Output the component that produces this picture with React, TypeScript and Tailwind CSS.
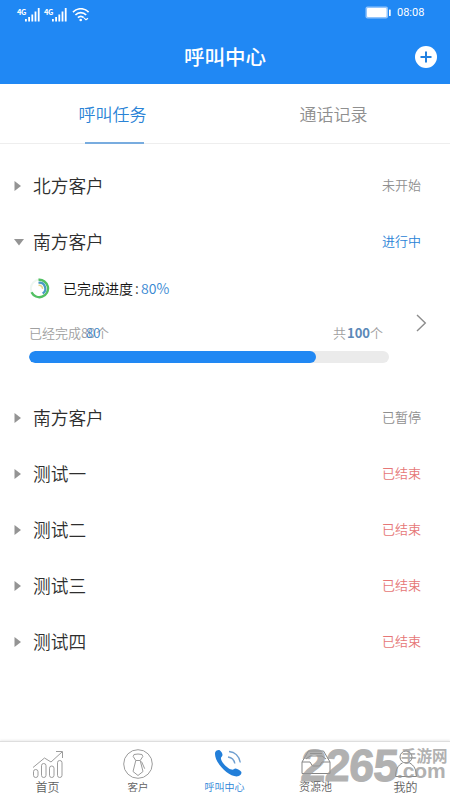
import React from 'react';
import clsx from 'clsx';

type Status = 'pending' | 'running' | 'paused' | 'ended';

interface Task {
    name: string;
    status: Status;
    progress?: { done: number; total: number };
}

const statusLabel: Record<Status, string> = {
    pending: '未开始',
    running: '进行中',
    paused: '已暂停',
    ended: '已结束',
};

const statusColor: Record<Status, string> = {
    pending: 'text-[#8f8f8f]',
    running: 'text-[#2a83d6]',
    paused: 'text-[#8f8f8f]',
    ended: 'text-[#e67777]',
};

const tasks: Task[] = [
    { name: '北方客户', status: 'pending' },
    { name: '南方客户', status: 'running', progress: { done: 80, total: 100 } },
    { name: '南方客户', status: 'paused' },
    { name: '测试一', status: 'ended' },
    { name: '测试二', status: 'ended' },
    { name: '测试三', status: 'ended' },
    { name: '测试四', status: 'ended' },
];

const Signal: React.FC = () => (
    <div className="flex">
        <span className="w-[8px] text-[7.5px] leading-[7px] font-bold tracking-[-0.5px]">4G</span>
        <svg className="w-[15px] h-[14px]" viewBox="0 0 15 14" fill="currentColor">
            <rect x="0" y="11" width="1.8" height="2.5" />
            <rect x="3.2" y="9" width="1.8" height="4.5" />
            <rect x="6.4" y="6.5" width="1.8" height="7" />
            <rect x="9.6" y="3.5" width="1.8" height="10" />
            <rect x="12.8" y="0" width="1.8" height="13.5" />
        </svg>
    </div>
);

const StatusBar: React.FC = () => (
    <div className="flex h-7 items-start pl-[17px] pr-[25px] pt-2">
        <Signal />
        <div className="ml-[4px]">
            <Signal />
        </div>
        <svg className="ml-[5px] w-[18px] h-[14px]" viewBox="0 0 18 14" fill="none" stroke="currentColor" strokeWidth="1.7">
            <path d="M1 4.2C5.3-.4 12.3-.4 16.6 4.2" />
            <path d="M3.4 7c3-3.1 7.8-3.1 10.8 0" />
            <path d="M5.9 9.7c1.7-1.6 4.1-1.6 5.8 0" />
            <circle cx="8.7" cy="12" r="1.3" fill="currentColor" stroke="none" />
            <path d="M12 9.8l2 2 2-1.5" strokeWidth="1.2" />
        </svg>
        <svg className="ml-auto mt-[-2px] w-[26px] h-[13px]" viewBox="0 0 26 13">
            <rect x="0.5" y="0.5" width="22.5" height="12" rx="2" fill="#94c5fb" />
            <rect x="2" y="2" width="19.5" height="9" rx="1" fill="#fff" />
            <rect x="24" y="3.5" width="1.7" height="6.5" rx="0.5" fill="#fff" />
        </svg>
        <span className="ml-[6px] mt-[-2px] w-[28px] font-['Roboto'] text-[11px] leading-[13px] font-normal whitespace-nowrap">08:08</span>
    </div>
);

const Header: React.FC = () => (
    <div className="relative flex h-14 items-center justify-center">
        <h1 className="text-[20.5px] leading-6 font-medium">呼叫中心</h1>
        <svg className="absolute right-[13px] top-[18px] w-[22px] h-[22px]" viewBox="0 0 22 22">
            <circle cx="11" cy="11" r="11" fill="#fff" />
            <path d="M11 5.5v11M5.5 11h11" stroke="#2180e0" strokeWidth="2" />
        </svg>
    </div>
);

const Tabs: React.FC = () => (
    <div className="flex h-[60px] border-b border-[#eeeeee] text-[17px]">
        <button className="relative w-1/2 text-[#2a83d6]">
            呼叫任务
            <span className="absolute bottom-[-1px] left-[85px] h-[2px] w-[59px] bg-[#78acdf]" />
        </button>
        <button className="w-1/2 pr-[8px] text-[#8f8f8f]">通话记录</button>
    </div>
);

const ProgressRing: React.FC = () => (
    <svg className="w-[21px] h-[21px]" viewBox="0 0 21 21" fill="none">
        <circle cx="10.5" cy="10.5" r="8.7" stroke="#eef7f1" strokeWidth="2" />
        <path d="M9.5 1.8a8.7 8.7 0 1 1-7 12.5" stroke="#52c063" strokeWidth="2.4" />
        <path d="M9.5 4.8a5.9 5.9 0 0 1 4.2 10.7" stroke="#4a9ac4" strokeWidth="2.2" />
        <path d="M9.5 7.4a3.3 3.3 0 0 1 4 3.5" stroke="#e2d890" strokeWidth="1.5" />
    </svg>
);

const TaskProgress: React.FC<{ done: number; total: number }> = ({ done, total }) => (
    <div className="flex h-[120px] items-start pl-[29px]">
        <div className="w-[360px]">
            <div className="flex h-[36px] items-center text-[14px]">
                <ProgressRing />
                <span className="ml-[13px] text-[#151515]">已完成进度</span>
                <span className="w-[8px] pl-[2px] text-[#151515]">:</span>
                <span className="text-[#3587d2]">{Math.round((done / total) * 100)}%</span>
            </div>
            <div className="mt-[17px] flex h-[20px] items-center justify-between text-[13px] text-[#a0a0a0]">
                <div className="flex">
                    已经完成
                    <span className="relative w-[15px]">
                        {done}
                        <span className="absolute left-[5px] top-0 text-[#3c85c9]">{done}</span>
                    </span>
                    个
                </div>
                <div className="flex pr-[6px]">
                    共
                    <span className="relative w-[24px] text-[#5b89b8]">
                        <span className="absolute left-[1px] top-0 font-bold">{total}</span>
                    </span>
                    个
                </div>
            </div>
            <div className="mt-[8px] h-3 overflow-hidden rounded-full bg-[#ebebeb]">
                <div className="h-full rounded-full bg-[#2188f3]" style={{ width: `${(done / total) * 100 - 0.3}%` }} />
            </div>
        </div>
        <svg className="ml-[27px] mt-[44px] w-[11px] h-[18px]" viewBox="0 0 11 18" fill="none" stroke="#8c8c8c" strokeWidth="1.4">
            <path d="M1 1l8.3 8L1 17" />
        </svg>
    </div>
);

const TaskRow: React.FC<{ task: Task }> = ({ task }) => (
    <div>
        <div className="flex h-14 items-center pl-[14px] pr-[29px]">
            <svg className="w-[10px] h-[10px]" viewBox="0 0 10 10" fill="#949494">
                {task.progress ? <path d="M0 2h10L5 8.5z" /> : <path d="M0.5 0l6.5 5-6.5 5z" />}
            </svg>
            <span className="ml-[9px] mb-[2px] text-[17.7px] leading-6 text-[#2e2e2e]">{task.name}</span>
            <span className={clsx('ml-auto mb-[2px] text-[13px]', statusColor[task.status])}>{statusLabel[task.status]}</span>
        </div>
        {task.progress && <TaskProgress {...task.progress} />}
    </div>
);

const ChartIcon: React.FC = () => (
    <svg className="w-[32px] h-[30px]" viewBox="0 0 32 30" fill="none" stroke="#9c9c9c" strokeWidth="1">
        <rect x="1.5" y="19.5" width="4.5" height="8" rx="2.2" />
        <rect x="9.5" y="13.5" width="4.5" height="14" rx="2.2" />
        <rect x="17.5" y="16" width="4.5" height="11.5" rx="2.2" />
        <rect x="25.5" y="10.5" width="4.5" height="17" rx="2.2" />
        <path d="M1 17.5L12.5 8l6.5 4L30 2M24 1.5h6.5V8" />
    </svg>
);

const TieIcon: React.FC = () => (
    <svg className="w-[30px] h-[30px]" viewBox="0 0 30 30" fill="none" stroke="#9c9c9c" strokeWidth="1">
        <circle cx="15" cy="15" r="14.3" />
        <path d="M11 5.5q4-1 8 0l.8 2-2.6 4h-4.4l-2.6-4zM12.8 11.5L10 22.5l5 4 5-4-2.8-11M18.5 12.5l3.2 7.2" />
    </svg>
);

const CallIcon: React.FC = () => (
    <svg className="ml-[7px] w-[28px] h-[28px]" viewBox="0 0 28 28">
        <path
            d="M1.2 3.2C2.2 1.3 4.7 .4 6 1.5c1.6 1.5 2.9 3.5 2.4 4.9-.4 1.2-1.5 1.6-1.5 2.8.1 3.8 6.5 10.6 10.8 11.4 1.9.3 2.3-1.4 4-1.2 1.7.2 4.7 2 5.5 3.4 1 1.8-1.2 4-3.3 4.5C14.7 28.8-.9 12.2 1.2 3.2z"
            fill="#237fd9"
        />
        <path d="M15 2.5c5.7.5 10.3 4.5 11.3 11M14 8c3.4.5 6.2 3 6.8 6.5" fill="none" stroke="#6f9fd0" strokeWidth="1.4" />
    </svg>
);

const InboxIcon: React.FC = () => (
    <svg className="w-[30px] h-[28px]" viewBox="0 0 30 28" fill="none" stroke="#858585" strokeWidth="1">
        <path d="M1 12L7.5 1h15L29 12v11.5H1zM1 12h8l2.5 4h7l2.5-4h8M5 9l4-3h12l4 3M9 3.500h12" />
    </svg>
);

const PersonIcon: React.FC = () => (
    <svg className="w-[24px] h-[28px]" viewBox="0 0 24 28" fill="none" stroke="#858585" strokeWidth="1">
        <circle cx="12" cy="7" r="6" />
        <path d="M8.5 13C4 15 1.5 20 1.5 26.5h21c0-6.5-2.5-11.5-7-13.5" />
    </svg>
);

// Site mark drawn over the right side of the tab bar
const Watermark: React.FC = () => (
    <div className="pointer-events-none absolute left-[301px] top-[1px] flex whitespace-nowrap text-[#979797] opacity-75">
        <span className="w-[98px] skew-x-[-4deg] font-['Liberation_Sans'] text-[45px] leading-[45px] font-bold tracking-[-0.8px] [-webkit-text-stroke:1px_#979797]">
            2265
        </span>
        <div className="pt-[4px] pl-[2px]">
            <div className="text-[15.5px] leading-[16px] font-bold">手游网</div>
            <div className="ml-[-4px] font-['Liberation_Sans'] text-[21px] leading-[16px] font-bold tracking-[-0.1px]">.com</div>
        </div>
    </div>
);

const navItems = [
    { label: '首页', icon: <ChartIcon />, cell: 'w-[95px]', text: 'text-[12px] text-[#606060]', top: 'pt-[8px]' },
    { label: '客户', icon: <TieIcon />, cell: 'w-[86px]', text: 'text-[10.5px] text-[#606060]', top: 'pt-[7px]' },
    { label: '呼叫中心', icon: <CallIcon />, cell: 'w-[87px]', text: 'text-[10px] text-[#2a83d6]', top: 'pt-[7px]' },
    { label: '资源池', icon: <InboxIcon />, cell: 'w-[95px]', text: 'text-[11px] text-[#606060]', top: 'pt-[8px]' },
    { label: '我的', icon: <PersonIcon />, cell: 'w-[85px]', text: 'text-[12px] text-[#606060]', top: 'pt-[8px]' },
];

const BottomNav: React.FC = () => (
    <div className="relative flex h-[59px] border-t border-[#dedede] bg-white shadow-[0_-1px_2px_rgba(0,0,0,0.08)]">
        {navItems.map((item) => (
            <button key={item.label} className={clsx('flex flex-col items-center', item.cell)}>
                <span className={clsx('flex h-[36px] shrink-0 items-start', item.top)}>{item.icon}</span>
                <span className={clsx('relative z-10 leading-[17px]', item.text)}>{item.label}</span>
            </button>
        ))}
        <Watermark />
    </div>
);

const App: React.FC = () => {
    return (
        <div className="flex h-[800px] w-[450px] flex-col overflow-hidden bg-white font-['Noto_Sans_CJK_SC',sans-serif] font-[350]">
            <div className="h-[84px] shrink-0 bg-[#2088f4] text-white">
                <StatusBar />
                <Header />
            </div>
            <Tabs />
            <div className="flex-1 pt-[14px]">
                {tasks.map((task, i) => (
                    <TaskRow key={i} task={task} />
                ))}
            </div>
            <BottomNav />
        </div>
    );
};

export default App;
